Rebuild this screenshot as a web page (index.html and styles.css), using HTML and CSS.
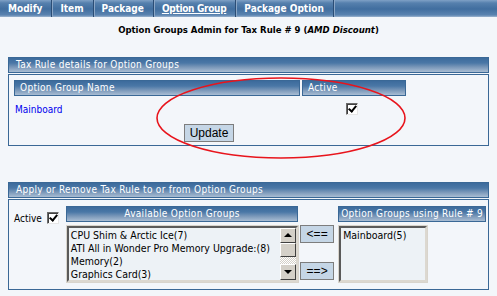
FILE: index.html
```html
<!DOCTYPE html>
<html lang="en">
<head>
  <meta charset="UTF-8">
  <title>Option Groups Admin</title>
  <link rel="stylesheet" href="styles.css">
</head>
<body>
  <div class="tabs">
    <a class="tab">Modify</a>
    <a class="tab">Item</a>
    <a class="tab">Package</a>
    <a class="tab current">Option Group</a>
    <a class="tab">Package Option</a>
  </div>

  <h1 class="page-title">Option Groups Admin for Tax Rule # 9 (<i>AMD Discount</i>)</h1>

  <div class="panel first-panel">
    <div class="panel-head">Tax Rule details for Option Groups</div>
    <div class="panel-body">
      <table class="grid">
        <tr>
          <th class="col-name">Option Group Name</th>
          <th class="col-active">Active</th>
        </tr>
        <tr class="data-row">
          <td><a class="group-link">Mainboard</a></td>
          <td class="check-cell"><span class="check on"></span></td>
        </tr>
        <tr>
          <td colspan="2" class="button-cell"><button class="btn">Update</button></td>
        </tr>
      </table>
    </div>
    <!-- red marker drawn over the screenshot -->
    <svg class="marker" width="254" height="86" viewBox="0 0 254 86">
      <ellipse cx="127" cy="43" rx="124" ry="40" fill="none" stroke="#e8141c" stroke-width="1.6"/>
    </svg>
  </div>

  <div class="panel second-panel">
    <div class="panel-head">Apply or Remove Tax Rule to or from Option Groups</div>
    <div class="panel-body apply">
      <div class="active-toggle">Active <span class="check on"></span></div>
      <div class="list-col available">
        <div class="sub-head centered">Available Option Groups</div>
        <div class="listbox wide">
          <ul class="options">
            <li>CPU Shim &amp; Arctic Ice(7)</li>
            <li>ATI All in Wonder Pro Memory Upgrade:(8)</li>
            <li>Memory(2)</li>
            <li>Graphics Card(3)</li>
          </ul>
          <div class="scrollbar">
            <span class="sb-btn up"></span>
            <span class="sb-thumb"></span>
            <span class="sb-track"></span>
            <span class="sb-btn down"></span>
          </div>
        </div>
      </div>
      <div class="move-col">
        <button class="btn move">&lt;==</button>
        <button class="btn move">==&gt;</button>
      </div>
      <div class="list-col using">
        <div class="sub-head">Option Groups using Rule # 9</div>
        <div class="listbox narrow">
          <ul class="options">
            <li>Mainboard(5)</li>
          </ul>
        </div>
      </div>
    </div>
  </div>
</body>
</html>
```

FILE: styles.css
```css
body {
  margin: 0;
  background: #f3f6fa;
  font-family: "DejaVu Sans Condensed", "DejaVu Sans", sans-serif;
  font-size: 10px;
  color: #000;
}

.tabs {
  display: flex;
  height: 17px;
  background: linear-gradient(#7fa1c6 0, #5680ad 3px, #416e9f 9px, #5a83b0 15px, #9db5cf 17px);
}

.tab {
  display: flex;
  align-items: center;
  padding: 0 9px 1px 8px;
  color: #fff;
  font-weight: bold;
  font-size: 10px;
  border-right: 1px solid #2b4d75;
  box-shadow: 1px 0 0 #8aa6c6;
}

.tab.current {
  text-decoration: underline;
  letter-spacing: -0.3px;
}

.page-title {
  margin: 0;
  padding: 7px 0 0;
  height: 33px;
  text-align: center;
  font-size: 9.5px;
  line-height: 12px;
  font-weight: bold;
}

.panel {
  margin: 0 8px;
}

.first-panel {
  position: relative;
}

.second-panel {
  margin-top: 36px;
}

.panel-head, .grid th, .sub-head {
  background: linear-gradient(#3c6b9c 0, #4a77a6 5px, #7896b8 9px, #a9bdd3 14px, #8fa9c6 16px);
  color: #fff;
  border: 1px solid #3a6896;
  height: 14px;
  line-height: 14px;
  padding: 0 5px;
  font-weight: normal;
  text-align: left;
  letter-spacing: 0.3px;
  white-space: nowrap;
}

.panel-head {
  padding-left: 7px;
  margin-bottom: 1px;
}

.panel-body {
  border: 1px solid #3a6896;
  padding: 5px 5px 3px;
}

.grid {
  border-collapse: separate;
  border-spacing: 0;
  width: 390px;
}

.grid th.col-name {
  width: 274px;
}

.grid th + th {
  position: relative;
  left: 2px;
}

.grid td {
  padding: 0;
  line-height: 13px;
}

.data-row td {
  padding-top: 6px;
  height: 13px;
}

.group-link {
  color: #0000ee;
  padding-left: 1px;
}

.check-cell {
  text-align: center;
}

.data-row .check-cell {
  padding-top: 7px;
}

.button-cell {
  text-align: center;
  padding-top: 8px !important;
}

.check {
  display: inline-block;
  width: 10px;
  height: 10px;
  border: 1px solid;
  border-color: #6b6b6b #e6e6e6 #e6e6e6 #6b6b6b;
  box-shadow: inset 1px 1px 0 #404040;
  background: #fff;
  vertical-align: top;
  position: relative;
}

.check.on::after {
  content: "";
  position: absolute;
  left: 3px;
  top: 0;
  width: 3px;
  height: 6px;
  border: solid #000;
  border-width: 0 2px 2px 0;
  transform: rotate(40deg);
}

.btn {
  font-family: "Liberation Sans", Arial, sans-serif;
  font-size: 12px;
  color: #000;
  background: #c5d6e6;
  border: 1px solid #7d7d7d;
  padding: 1px 5px 1px;
  height: 18px;
  vertical-align: top;
}

.marker {
  position: absolute;
  left: 146px;
  top: 18px;
  pointer-events: none;
}

.apply {
  display: flex;
  align-items: flex-start;
  padding: 6px 2px 7px 5px;
}

.active-toggle {
  display: flex;
  align-items: center;
  gap: 5px;
  padding-top: 6px;
  width: 52px;
}

.list-col.available {
  width: 233px;
}

.list-col.using {
  width: 148px;
}

.sub-head {
  padding: 0 2px;
}

.sub-head.centered {
  text-align: center;
}

.listbox {
  display: flex;
  margin: 4px 0 0 1px;
  height: 52px;
  border: 2px solid;
  border-color: #5a5a5a #dcd8d0 #dcd8d0 #5a5a5a;
  background: #edf2f6;
  box-shadow: 0 0 0 1px #d8d4cc;
}

.listbox.wide {
  width: 227px;
}

.listbox.narrow {
  width: 84px;
}

.options {
  flex: 1;
  margin: 0;
  padding: 1px 0 0 2px;
  list-style: none;
  font-family: "DejaVu Sans Condensed", "DejaVu Sans", sans-serif;
  font-size: 10.5px;
  line-height: 13px;
  white-space: nowrap;
  overflow: hidden;
}

.scrollbar {
  width: 16px;
  display: flex;
  flex-direction: column;
}

.sb-btn, .sb-thumb {
  height: 15px;
  background: #d4d0c8;
  border: 1px solid;
  border-color: #fff #404040 #404040 #fff;
  box-sizing: border-box;
  position: relative;
}

.sb-thumb {
  height: 14px;
}

.sb-track {
  flex: 1;
  background: repeating-conic-gradient(#fff 0 25%, #d4d0c8 0 50%) 0 0 / 2px 2px;
}

.sb-btn.down {
  height: 16px;
}

.sb-btn::after {
  content: "";
  position: absolute;
  left: 3px;
  border-left: 4px solid transparent;
  border-right: 4px solid transparent;
}

.sb-btn.up::after {
  top: 4px;
  border-bottom: 4px solid #000;
}

.sb-btn.down::after {
  top: 5px;
  border-top: 4px solid #000;
}

.move-col {
  display: flex;
  flex-direction: column;
  gap: 19px;
  padding: 19px 4px 0 2px;
}

.btn.move {
  width: 34px;
  padding: 0;
}
```
